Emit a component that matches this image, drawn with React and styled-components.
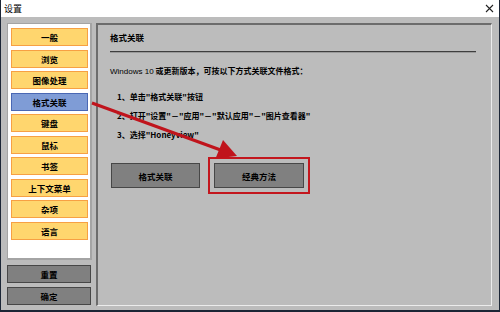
import React from "react";
import styled, { createGlobalStyle } from "styled-components";

const Global = createGlobalStyle`
  html, body { margin: 0; padding: 0; background: #bcbcbc; }
  body { font-family: "Noto Sans CJK SC", "Noto Sans", sans-serif; }
  * { box-sizing: border-box; }
`;

const Window = styled.div`
  position: relative;
  width: 500px;
  height: 312px;
  display: flex;
  flex-direction: column;
  border-left: 1px solid #1c2636;
  border-right: 1px solid #1c2636;
  border-bottom: 2px solid #1c2636;
  overflow: hidden;
`;

const TitleBar = styled.div`
  height: 17px;
  flex: none;
  background: #ffffff;
  display: flex;
  align-items: center;
  justify-content: space-between;
  padding: 0 5px 0 3px;
  font-size: 9px;
  color: #000;
`;

const Body = styled.div`
  flex: 1;
  display: flex;
  background: #bcbcbc;
  padding: 6px 7px 4px 6px;
`;

const Sidebar = styled.div`
  width: 85px;
  flex: none;
  display: flex;
  flex-direction: column;
`;

const ListBox = styled.div`
  height: 237px;
  background: #ffffff;
  border: 1px solid #a4a4a4;
  border-right-width: 2px;
  border-bottom-width: 2px;
  padding: 4px 2px 0 3px;
  display: flex;
  flex-direction: column;
  gap: 3.55px;
`;

const NavItem = styled.div`
  height: 18px;
  display: flex;
  align-items: center;
  justify-content: center;
  font-size: 8.5px;
  font-weight: 700;
  color: #000;
  background: ${(p) => (p.$active ? "#7f9cd6" : "#ffd66e")};
  border: 1.5px solid ${(p) => (p.$active ? "#4a68b4" : "#f7a043")};
`;

const SideButtons = styled.div`
  margin-top: 5px;
  display: flex;
  flex-direction: column;
  gap: 4px;
  width: 84px;
`;

const GreyButton = styled.div`
  height: ${(p) => p.$h || 18}px;
  width: ${(p) => (p.$w ? p.$w + "px" : "auto")};
  display: flex;
  align-items: center;
  justify-content: center;
  background: #808080;
  border: 1.5px solid #474747;
  font-size: 8.5px;
  font-weight: 700;
  color: #000;
  outline: ${(p) => (p.$marked ? "2px solid #c3161d" : "none")};
  outline-offset: 4px;
`;

const Panel = styled.div`
  flex: 1;
  margin-left: 4px;
  border-top: 2px solid #6c6c6c;
  border-left: 2px solid #6c6c6c;
  border-right: 1px solid #ececec;
  border-bottom: 1px solid #ececec;
  padding: 6px 15px 0 12px;
  display: flex;
  flex-direction: column;
  color: #000;
`;

const Heading = styled.div`
  height: 12px;
  line-height: 12px;
  font-size: 8.5px;
  font-weight: 700;
`;

const Rule = styled.div`
  margin-top: 8px;
  height: 2px;
  border-top: 1px solid #3e3e3e;
  border-bottom: 1px solid #9a9a9a;
`;

const Line = styled.div`
  height: 12px;
  line-height: 12px;
  font-size: 8px;
  margin-top: ${(p) => p.$mt}px;
  padding-left: ${(p) => p.$indent || 0}px;
  font-weight: 700;
  white-space: nowrap;
`;

const Plain = styled.span`
  font-family: "Liberation Sans", sans-serif;
  font-weight: 400;
`;

const ButtonRow = styled.div`
  margin-top: 22px;
  display: flex;
  gap: 14px;
  padding-left: 1px;
`;

const ArrowLayer = styled.svg`
  position: absolute;
  left: -1px;
  top: 0;
  pointer-events: none;
`;

const CloseIcon = () => (
  <svg width="9" height="9" viewBox="0 0 9 9">
    <path d="M1 1 L8 8 M8 1 L1 8" stroke="#222" strokeWidth="1.1" />
  </svg>
);

const items = ["一般", "浏览", "图像处理", "格式关联", "键盘", "鼠标", "书签", "上下文菜单", "杂项", "语言"];

export default function App() {
  return (
    <>
      <Global />
      <Window>
        <TitleBar>
          <span>设置</span>
          <CloseIcon />
        </TitleBar>
        <Body>
          <Sidebar>
            <ListBox>
              {items.map((t) => (
                <NavItem key={t} $active={t === "格式关联"}>{t}</NavItem>
              ))}
            </ListBox>
            <SideButtons>
              <GreyButton>重置</GreyButton>
              <GreyButton>确定</GreyButton>
            </SideButtons>
          </Sidebar>
          <Panel>
            <Heading>格式关联</Heading>
            <Rule />
            <Line $mt={12}>
              <Plain>Windows 10</Plain> 或更新版本，可按以下方式关联文件格式：
            </Line>
            <Line $mt={14} $indent={7}>1、单击"格式关联"按钮</Line>
            <Line $mt={7} $indent={7}>2、打开"设置"－"应用"－"默认应用"－"图片查看器"</Line>
            <Line $mt={7} $indent={7}>3、选择"Honeyview"</Line>
            <ButtonRow>
              <GreyButton $h={25} $w={89}>格式关联</GreyButton>
              <GreyButton $h={25} $w={90} $marked>经典方法</GreyButton>
            </ButtonRow>
          </Panel>
        </Body>
        <ArrowLayer width="500" height="312" viewBox="0 0 500 312">
          <line x1="92" y1="103" x2="222" y2="150.5" stroke="#c0141c" strokeWidth="3" />
          <polygon points="237,156 215.5,158.5 223,140" fill="#c0141c" />
        </ArrowLayer>
      </Window>
    </>
  );
}
